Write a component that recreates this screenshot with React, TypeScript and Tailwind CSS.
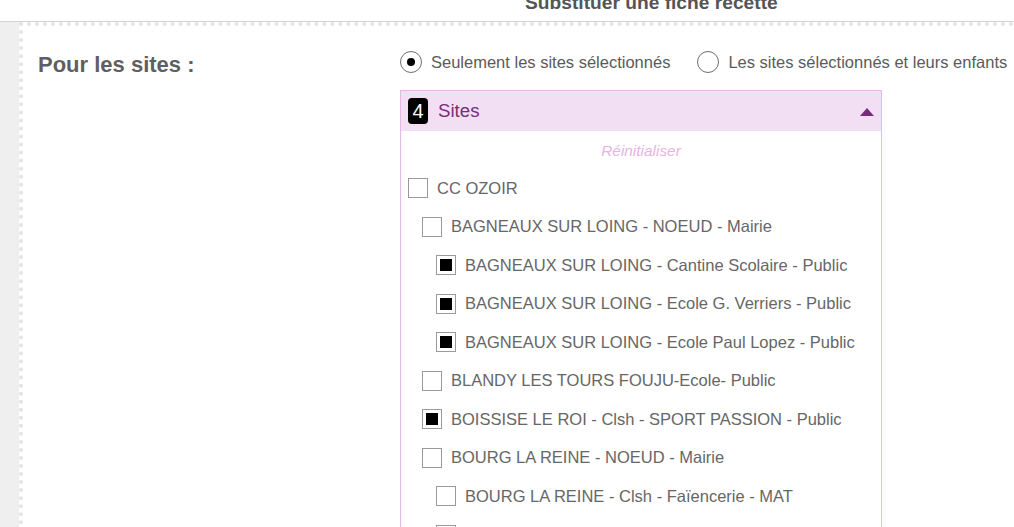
import { useState } from 'react';

type Site = { label: string; level: number; checked: boolean };

const sites: Site[] = [
  { label: 'CC OZOIR', level: 0, checked: false },
  { label: 'BAGNEAUX SUR LOING - NOEUD - Mairie', level: 1, checked: false },
  { label: 'BAGNEAUX SUR LOING - Cantine Scolaire - Public', level: 2, checked: true },
  { label: 'BAGNEAUX SUR LOING - Ecole G. Verriers - Public', level: 2, checked: true },
  { label: 'BAGNEAUX SUR LOING - Ecole Paul Lopez - Public', level: 2, checked: true },
  { label: 'BLANDY LES TOURS FOUJU-Ecole- Public', level: 1, checked: false },
  { label: 'BOISSISE LE ROI - Clsh - SPORT PASSION - Public', level: 1, checked: true },
  { label: 'BOURG LA REINE - NOEUD - Mairie', level: 1, checked: false },
  { label: 'BOURG LA REINE - Clsh - Faïencerie - MAT', level: 2, checked: false },
  { label: 'BOURG LA REINE - Clsh - Fontaine Grelot - MAT', level: 2, checked: false },
];

const indent = ['pl-[7px]', 'pl-[21px]', 'pl-[35px]'];

function Radio({ on, label }: { on: boolean; label: string }) {
  return (
    <label className="flex items-center gap-[9px]">
      <span className="flex h-[22px] w-[22px] items-center justify-center rounded-full border border-[#6f6f6f] bg-white">
        {on && <span className="h-[8px] w-[8px] rounded-full bg-black" />}
      </span>
      <span>{label}</span>
    </label>
  );
}

function Checkbox({ checked }: { checked: boolean }) {
  return (
    <span className="flex h-[20px] w-[20px] shrink-0 items-center justify-center border border-[#9a9a9a] bg-white">
      {checked && <span className="h-[12px] w-[12px] bg-black" />}
    </span>
  );
}

export default function App() {
  const [open] = useState(true);
  const count = sites.filter((s) => s.checked).length;

  return (
    <div className="h-[527px] overflow-hidden bg-white font-['Liberation_Sans',Arial,sans-serif] text-[#666]">
      <div className="h-[22px] overflow-hidden border-b border-[#d2d2d2]">
        <h1 className="-mt-[9px] ml-[525px] text-[19.2px] font-bold leading-[24px] text-[#555]">
          Substituer une fiche recette
        </h1>
      </div>

      <div className="flex h-full">
        <div className="w-[19px] shrink-0 bg-[#efefef]" />
        <div className="flex flex-1 border-l-4 border-t-4 border-dotted border-[#e4e4e4] pt-[24px]">
          <div className="w-[377px] shrink-0 pl-[15px] pt-[1px] text-[22px] font-bold leading-[28px] text-[#5f5f5f]">
            Pour les sites :
          </div>

          <div className="flex-1">
            <div className="flex items-center gap-[27px] text-[16.5px] text-[#5a5a5a]">
              <Radio on label="Seulement les sites sélectionnés" />
              <Radio on={false} label="Les sites sélectionnés et leurs enfants" />
            </div>

            <div className="mt-[15px] w-[482px] border border-[#e7b7e7]">
              <div className="flex h-[40px] items-center bg-[#f3dff3] pl-[7px] pr-[6px]">
                <span className="flex h-[26px] w-[20px] items-center justify-center rounded-[4px] bg-black text-[20px] text-white">
                  {count}
                </span>
                <span className="ml-[10px] text-[18.7px] text-[#7a2d7c]">Sites</span>
                <svg className="ml-auto mr-[1px] mt-[2px]" width="14" height="8" viewBox="0 0 14 8">
                  <polygon points="7,0 14,8 0,8" fill={open ? '#7a2a7a' : '#7a2a7a'} />
                </svg>
              </div>

              <div className="pt-[8px] text-center text-[15.4px] italic text-[#e9b3e4]">
                Réinitialiser
              </div>

              <ul className="pt-[7px]">
                {sites.map((s) => (
                  <li
                    key={s.label}
                    className={`flex h-[38.5px] items-center gap-[9px] text-[16.5px] text-[#666] ${indent[s.level]}`}
                  >
                    <Checkbox checked={s.checked} />
                    <span className="whitespace-nowrap">{s.label}</span>
                  </li>
                ))}
              </ul>
            </div>
          </div>
        </div>
      </div>
    </div>
  );
}
